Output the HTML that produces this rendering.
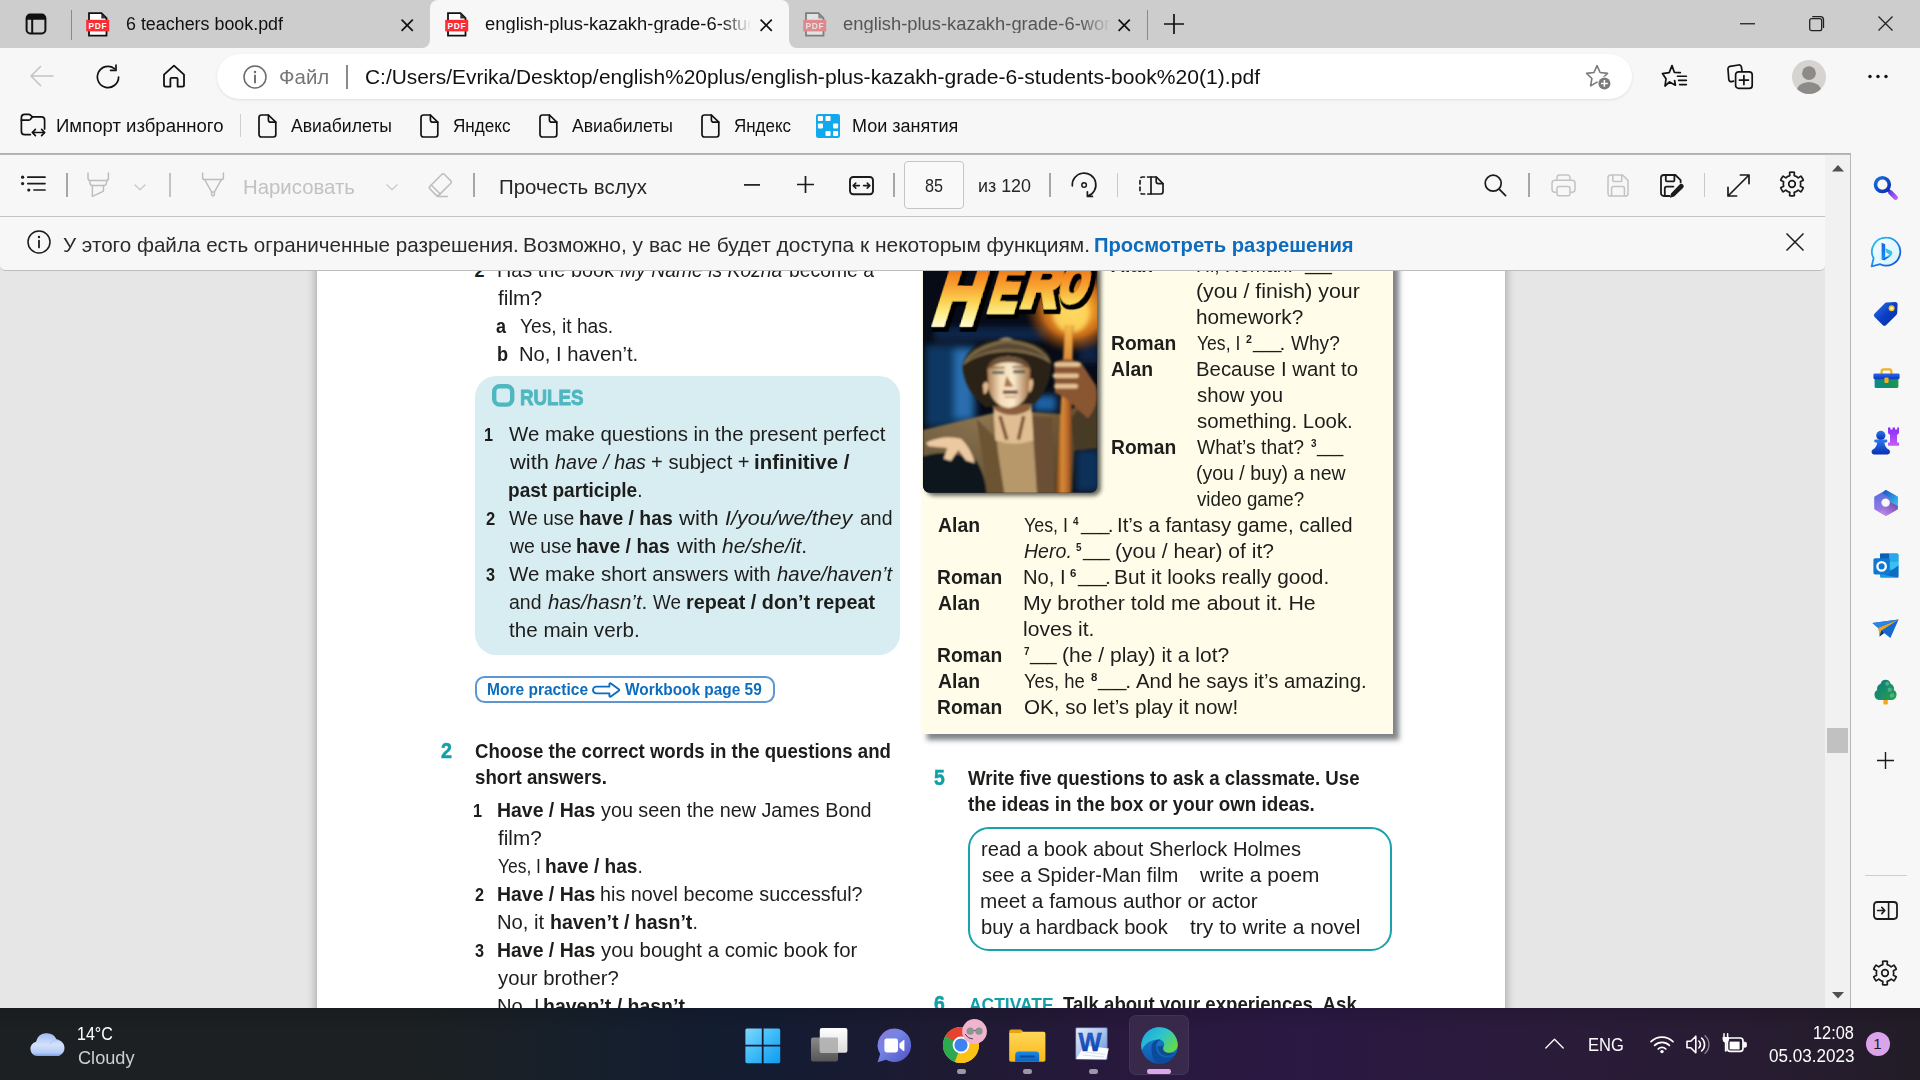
<!DOCTYPE html>
<html lang="ru">
<head>
<meta charset="utf-8">
<title>english-plus-kazakh-grade-6-students-book (1).pdf</title>
<style>
*{box-sizing:border-box;margin:0;padding:0}
html,body{width:1920px;height:1080px;overflow:hidden;background:#e6e6e6;font-family:"Liberation Sans",sans-serif;}
#screen{position:relative;width:1920px;height:1080px;overflow:hidden;background:#e6e6e6}
.t{position:absolute;white-space:nowrap;transform-origin:0 0}
.a{position:absolute}
.layer{position:absolute;left:0;top:0;width:0;height:0}
svg{position:absolute;overflow:visible}
b{font-weight:bold}
sup{font-size:60%;font-weight:bold;vertical-align:baseline;position:relative;top:-0.45em;line-height:0}
.u{position:relative;top:-1px;font-weight:normal}
i{font-style:italic}
.nb{font-weight:normal;font-style:normal}

</style>
</head>
<body>
<div id="screen">
<div class="layer" id="browser" style="z-index:3">
<div class="a" style="left:0px;top:0px;width:1920px;height:48px;background:#cdcdcd"></div>
<div class="a" style="left:0px;top:48px;width:1920px;height:105px;background:#f7f7f7"></div>
<div class="a" style="left:430px;top:0px;width:359px;height:49px;background:#f7f7f7;border-radius:8px 8px 0 0"></div>
<svg style="left:422px;top:40px" width="8" height="8" viewBox="0 0 8 8" ><path d="M8 0 A8 8 0 0 1 0 8 L8 8 Z" fill="#f7f7f7"/></svg>
<svg style="left:789px;top:40px" width="8" height="8" viewBox="0 0 8 8" ><path d="M0 0 A8 8 0 0 0 8 8 L0 8 Z" fill="#f7f7f7"/></svg>
<svg style="left:25px;top:13px" width="22" height="22" viewBox="0 0 22 22" ><rect x="1.6" y="1.6" width="18.8" height="18.8" rx="3.6" fill="none" stroke="#111" stroke-width="2"/><path d="M1.6 5.2 a3.6 3.6 0 0 1 3.6 -3.6 h11.6 a3.6 3.6 0 0 1 3.6 3.6 v1.6 h-18.8z" fill="#111"/><path d="M7.2 6 v14" stroke="#111" stroke-width="2"/></svg>
<div class="a" style="left:71px;top:10px;width:1px;height:30px;background:#8a8a8a"></div>
<svg style="left:86px;top:11px" width="24" height="26" viewBox="0 0 24 26" opacity="1"><path d="M3 2.2 h12.5 l5 5 v17.4 h-17.5z" fill="#fff" stroke="#111" stroke-width="1.8" stroke-linejoin="miter"/><path d="M15.3 2.4 v5.2 h5.2z" fill="#333"/><rect x="0.2" y="8.8" width="23" height="11.6" fill="#fb2d34"/><text x="12" y="17.7" font-family="Liberation Sans, sans-serif" font-weight="bold" font-size="8.4" fill="#fff" text-anchor="middle" letter-spacing="0.7">PDF</text></svg>
<svg style="left:445px;top:11px" width="24" height="26" viewBox="0 0 24 26" opacity="1"><path d="M3 2.2 h12.5 l5 5 v17.4 h-17.5z" fill="#fff" stroke="#111" stroke-width="1.8" stroke-linejoin="miter"/><path d="M15.3 2.4 v5.2 h5.2z" fill="#333"/><rect x="0.2" y="8.8" width="23" height="11.6" fill="#fb2d34"/><text x="12" y="17.7" font-family="Liberation Sans, sans-serif" font-weight="bold" font-size="8.4" fill="#fff" text-anchor="middle" letter-spacing="0.7">PDF</text></svg>
<svg style="left:803px;top:11px" width="24" height="26" viewBox="0 0 24 26" opacity="0.42"><path d="M3 2.2 h12.5 l5 5 v17.4 h-17.5z" fill="#fff" stroke="#111" stroke-width="1.8" stroke-linejoin="miter"/><path d="M15.3 2.4 v5.2 h5.2z" fill="#333"/><rect x="0.2" y="8.8" width="23" height="11.6" fill="#fb2d34"/><text x="12" y="17.7" font-family="Liberation Sans, sans-serif" font-weight="bold" font-size="8.4" fill="#fff" text-anchor="middle" letter-spacing="0.7">PDF</text></svg>
<svg style="left:401.2px;top:19px" width="12.4" height="12.4" viewBox="0 0 12.4 12.4" ><path d="M0.6 0.6 L11.8 11.8 M11.8 0.6 L0.6 11.8" stroke="#111" stroke-width="1.7" stroke-linecap="butt" fill="none"/></svg>
<svg style="left:759.6px;top:19px" width="12.4" height="12.4" viewBox="0 0 12.4 12.4" ><path d="M0.6 0.6 L11.8 11.8 M11.8 0.6 L0.6 11.8" stroke="#111" stroke-width="1.7" stroke-linecap="butt" fill="none"/></svg>
<svg style="left:1118.2px;top:19px" width="12.4" height="12.4" viewBox="0 0 12.4 12.4" ><path d="M0.6 0.6 L11.8 11.8 M11.8 0.6 L0.6 11.8" stroke="#111" stroke-width="1.7" stroke-linecap="butt" fill="none"/></svg>
<div class="a" style="left:1147px;top:10px;width:1px;height:30px;background:#8a8a8a"></div>
<svg style="left:1164px;top:14px" width="20" height="20" viewBox="0 0 20 20" ><path d="M10 0 V20 M0 10 H20" stroke="#111" stroke-width="1.7" fill="none"/></svg>
<svg style="left:1740px;top:23px" width="15" height="2" viewBox="0 0 15 2" ><path d="M0 0.75 H15" stroke="#222" stroke-width="1.3"/></svg>
<svg style="left:1809px;top:16px" width="16" height="16" viewBox="0 0 16 16" ><rect x="0.7" y="2.7" width="12" height="12" rx="2" fill="none" stroke="#222" stroke-width="1.3"/><path d="M3.2 0.7 H11.5 a3 3 0 0 1 3 3 V12" fill="none" stroke="#222" stroke-width="1.3"/></svg>
<svg style="left:1878px;top:16px" width="15" height="15" viewBox="0 0 15 15" ><path d="M0.5 0.5 L14.5 14.5 M14.5 0.5 L0.5 14.5" stroke="#222" stroke-width="1.3" fill="none"/></svg>
<svg style="left:29px;top:64px" width="26" height="24" viewBox="0 0 26 24" ><g fill="none" stroke="#c4c4c4" stroke-width="1.6" stroke-linecap="round" stroke-linejoin="round"><path d="M24 12 H2.5 M11.5 2.5 L2 12 L11.5 21.5"/></g></svg>
<svg style="left:95px;top:64px" width="26" height="26" viewBox="0 0 26 26" ><g fill="none" stroke="#111" stroke-width="1.7" stroke-linecap="round" stroke-linejoin="round"><path d="M23.6 13 A10.6 10.6 0 1 1 19.5 4.6"/><path d="M21 1.2 V6.4 H15.6" /></g></svg>
<svg style="left:162px;top:64px" width="24" height="24" viewBox="0 0 24 24" ><g fill="none" stroke="#111" stroke-width="1.8" stroke-linecap="round" stroke-linejoin="round"><path d="M2 10.6 L12 1.6 L22 10.6 V21 a1.6 1.6 0 0 1 -1.6 1.6 H15.6 V15 a1.2 1.2 0 0 0 -1.2 -1.2 H9.6 a1.2 1.2 0 0 0 -1.2 1.2 V22.6 H3.6 A1.6 1.6 0 0 1 2 21z"/></g></svg>
<div class="a" style="left:217px;top:54px;width:1415px;height:45px;background:#fff;border-radius:22.5px;box-shadow:0 1px 3px rgba(0,0,0,0.10)"></div>
<svg style="left:243px;top:64.5px" width="24" height="24" viewBox="0 0 24 24" ><g fill="none" stroke="#6b6b6b" stroke-width="1.5" stroke-linecap="round" stroke-linejoin="round"><circle cx="12" cy="12" r="11"/><path d="M12 10.5 V17.5" stroke-width="1.9"/><circle cx="12" cy="6.9" r="1.25" fill="#6b6b6b" stroke="none"/></g></svg>
<div class="a" style="left:346px;top:65px;width:1.5px;height:24px;background:#8a8a8a"></div>
<svg style="left:1585px;top:64px" width="28" height="27" viewBox="0 0 28 27" ><path d="M12 2 L14.9 8.4 L21.8 9.2 L16.8 14 L18 20.9 L12 17.4 L6 20.9 L7.2 14 L2.2 9.2 L9.1 8.4z" fill="none" stroke="#7a7a7a" stroke-width="1.5" stroke-linejoin="round" transform="translate(-0.8 -0.5) scale(1.07)"/><circle cx="19.4" cy="19.4" r="6.9" fill="#fff"/><circle cx="19.4" cy="19.4" r="6" fill="#7a7a7a"/><path d="M19.4 16 V22.8 M16 19.4 H22.8" stroke="#fff" stroke-width="1.5"/></svg>
<svg style="left:1661px;top:64px" width="27" height="25" viewBox="0 0 27 25" ><g fill="none" stroke="#111" stroke-width="1.7" stroke-linecap="round" stroke-linejoin="round"><path d="M11 1.6 L13.3 8.3 L19.3 8.6 M13.6 16.5 L14.4 21.2 L8.6 17.9 L4 22 L5 14.8 L1.4 9.6 L8.2 8.6 L11 1.6" /><path d="M16.4 12.2 H25.4 M17.6 16.4 H25.4 M18.6 20.6 H25.4" stroke-width="1.6"/></g></svg>
<svg style="left:1727px;top:63.5px" width="27" height="26" viewBox="0 0 27 26" ><g fill="none" stroke="#111" stroke-width="1.7" stroke-linecap="round" stroke-linejoin="round"><path d="M6.6 17.2 L4.6 17.6 a2.4 2.4 0 0 1 -2.8 -2 L1 5.2 a2.4 2.4 0 0 1 2 -2.8 L11.6 1 a2.4 2.4 0 0 1 2.8 2 L15 6.8"/><rect x="8.6" y="7.8" width="16.6" height="16.6" rx="3"/><path d="M16.9 11.6 V20.6 M12.4 16.1 H21.4"/></g></svg>
<svg style="left:1792px;top:60px" width="34" height="34" viewBox="0 0 34 34" ><defs><clipPath id="av"><circle cx="17" cy="17" r="17"/></clipPath></defs><circle cx="17" cy="17" r="17" fill="#d6d4d1"/><g clip-path="url(#av)" fill="#8d8a88"><circle cx="17" cy="13.2" r="6.9"/><ellipse cx="17" cy="30.5" rx="12" ry="8.6"/></g></svg>
<svg style="left:1868px;top:73.5px" width="20" height="5" viewBox="0 0 20 5" ><circle cx="2" cy="2.5" r="1.7" fill="#111"/><circle cx="10" cy="2.5" r="1.7" fill="#111"/><circle cx="18" cy="2.5" r="1.7" fill="#111"/></svg>
<svg style="left:20px;top:113px" width="26" height="26" viewBox="0 0 26 26" ><g fill="none" stroke="#111" stroke-width="1.7" stroke-linecap="round" stroke-linejoin="round"><path d="M10.4 21.6 H4.6 a3.2 3.2 0 0 1 -3.2 -3.2 V4.6 a3.2 3.2 0 0 1 3.2 -3.2 H8.8 a2.4 2.4 0 0 1 1.7 0.7 L12.4 3.8 H21.4 a3.2 3.2 0 0 1 3.2 3.2 V16"/><path d="M1.4 7.2 H8.6 a2.4 2.4 0 0 0 1.7 -0.7 L12.4 3.9"/><path d="M12.6 19.5 H24.4 M15.4 16.4 L12.3 19.5 L15.4 22.6 M21.6 16.4 L24.7 19.5 L21.6 22.6" stroke-width="1.7"/></g></svg>
<div class="a" style="left:240px;top:114px;width:1px;height:23px;background:#d0d0d0"></div>
<svg style="left:257.5px;top:114px" width="19" height="24" viewBox="0 0 19 24" ><g fill="none" stroke="#111" stroke-width="1.7" stroke-linecap="round" stroke-linejoin="round"><path d="M3.4 1 H10.4 L17.8 8.2 V20.6 a2.4 2.4 0 0 1 -2.4 2.4 H3.4 A2.4 2.4 0 0 1 1 20.6 V3.4 A2.4 2.4 0 0 1 3.4 1z"/><path d="M10.4 1.2 V6 a2.2 2.2 0 0 0 2.2 2.2 H17.6"/></g></svg>
<svg style="left:419.5px;top:114px" width="19" height="24" viewBox="0 0 19 24" ><g fill="none" stroke="#111" stroke-width="1.7" stroke-linecap="round" stroke-linejoin="round"><path d="M3.4 1 H10.4 L17.8 8.2 V20.6 a2.4 2.4 0 0 1 -2.4 2.4 H3.4 A2.4 2.4 0 0 1 1 20.6 V3.4 A2.4 2.4 0 0 1 3.4 1z"/><path d="M10.4 1.2 V6 a2.2 2.2 0 0 0 2.2 2.2 H17.6"/></g></svg>
<svg style="left:538.5px;top:114px" width="19" height="24" viewBox="0 0 19 24" ><g fill="none" stroke="#111" stroke-width="1.7" stroke-linecap="round" stroke-linejoin="round"><path d="M3.4 1 H10.4 L17.8 8.2 V20.6 a2.4 2.4 0 0 1 -2.4 2.4 H3.4 A2.4 2.4 0 0 1 1 20.6 V3.4 A2.4 2.4 0 0 1 3.4 1z"/><path d="M10.4 1.2 V6 a2.2 2.2 0 0 0 2.2 2.2 H17.6"/></g></svg>
<svg style="left:700.5px;top:114px" width="19" height="24" viewBox="0 0 19 24" ><g fill="none" stroke="#111" stroke-width="1.7" stroke-linecap="round" stroke-linejoin="round"><path d="M3.4 1 H10.4 L17.8 8.2 V20.6 a2.4 2.4 0 0 1 -2.4 2.4 H3.4 A2.4 2.4 0 0 1 1 20.6 V3.4 A2.4 2.4 0 0 1 3.4 1z"/><path d="M10.4 1.2 V6 a2.2 2.2 0 0 0 2.2 2.2 H17.6"/></g></svg>
<svg style="left:816px;top:114px" width="24" height="24" viewBox="0 0 24 24" ><rect width="24" height="24" rx="2.2" fill="#10a9ee"/><rect x="1.9" y="2" width="5.1" height="5" rx="0.8" fill="#fdfaf8"/><rect x="9.5" y="2" width="5.1" height="5" rx="0.8" fill="#fdfaf8"/><rect x="1.9" y="9.4" width="5.1" height="5" rx="0.8" fill="#fdfaf8"/><rect x="17" y="9.4" width="5.1" height="5" rx="0.8" fill="#fdfaf8"/><rect x="9.5" y="17" width="5.1" height="5" rx="0.8" fill="#fdfaf8"/><rect x="17" y="17" width="5.1" height="5" rx="0.8" fill="#fdfaf8"/></svg>
<div class="a" style="left:0px;top:153px;width:1851px;height:2px;background:linear-gradient(#acacac,#bdbdbd)"></div>
<div class="a" style="left:0px;top:155px;width:1825px;height:62px;background:#f7f7f7;border-bottom:1px solid #c3c3c3"></div>
<div class="a" style="left:0px;top:217px;width:1825px;height:54px;background:#f7f7f7;border-bottom:1px solid #bcbcbc;border-radius:0 0 5px 5px"></div>
<div class="a" style="left:1825px;top:155px;width:25px;height:853px;background:#f1f1f1"></div>
<div class="a" style="left:1850px;top:155px;width:1px;height:853px;background:#b9b9b9"></div>
<svg style="left:1831.5px;top:164.5px" width="12" height="7" viewBox="0 0 12 7" ><path d="M6 0 L12 6.6 H0z" fill="#505050"/></svg>
<svg style="left:1831.5px;top:992px" width="12" height="7" viewBox="0 0 12 7" ><path d="M6 6.6 L12 0 H0z" fill="#505050"/></svg>
<div class="a" style="left:1827px;top:727.5px;width:21px;height:25.5px;background:#c1c1c1"></div>
<svg style="left:21px;top:175px" width="25" height="18" viewBox="0 0 25 18" ><g fill="#1b1b1b"><circle cx="1.6" cy="2.2" r="1.6"/><circle cx="1.6" cy="8.6" r="1.6"/><circle cx="7.8" cy="15" r="1.6"/></g><path d="M6.8 2.2 H24 M6.8 8.6 H24 M13 15 H24" stroke="#1b1b1b" stroke-width="1.7" stroke-linecap="round"/></svg>
<div class="a" style="left:66.25px;top:173px;width:1.5px;height:24px;background:#a6a6a6"></div>
<svg style="left:87px;top:172px" width="23" height="26" viewBox="0 0 23 26" ><g fill="none" stroke="#bdbdbd" stroke-width="1.5" stroke-linecap="round" stroke-linejoin="round"><path d="M1 1 V6.2 a2.4 2.4 0 0 0 2.4 2.4 H19 a2.4 2.4 0 0 0 2.4 -2.4 V1"/><path d="M2.6 8.8 L3.2 11.8 a2 2 0 0 0 2 1.7 H17.2 a2 2 0 0 0 2 -1.7 L19.8 8.8"/><path d="M5.4 13.6 V24.4 L15.6 19.6 a1.5 1.5 0 0 0 0.9 -1.4 V13.6"/></g></svg>
<svg style="left:134px;top:184px" width="12" height="7" viewBox="0 0 12 7" ><g fill="none" stroke="#c8c8c8" stroke-width="1.2" stroke-linecap="round" stroke-linejoin="round"><path d="M0.8 0.8 L6 5.8 L11.2 0.8"/></g></svg>
<div class="a" style="left:169.25px;top:173px;width:1.5px;height:24px;background:#c3c3c3"></div>
<svg style="left:201px;top:172px" width="24" height="26" viewBox="0 0 24 26" ><g fill="none" stroke="#bdbdbd" stroke-width="1.5" stroke-linecap="round" stroke-linejoin="round"><path d="M1.6 1 V5.4 a2.2 2.2 0 0 0 2.2 2.2 H20.2 a2.2 2.2 0 0 0 2.2 -2.2 V1"/><path d="M3.8 7.8 L10.6 20 M20.2 7.8 L13.4 20 M10.6 20 H13.4 M10.6 20 V22.6 a1.4 1.4 0 0 0 2.8 0 V20"/></g></svg>
<svg style="left:386px;top:184px" width="12" height="7" viewBox="0 0 12 7" ><g fill="none" stroke="#c8c8c8" stroke-width="1.2" stroke-linecap="round" stroke-linejoin="round"><path d="M0.8 0.8 L6 5.8 L11.2 0.8"/></g></svg>
<svg style="left:428px;top:172px" width="25" height="26" viewBox="0 0 25 26" ><g fill="none" stroke="#bdbdbd" stroke-width="1.5" stroke-linecap="round" stroke-linejoin="round"><path d="M13.7 2.5 a2 2 0 0 1 2.8 0 L22.6 8.6 a2 2 0 0 1 0 2.8 L10.9 23.1 a2 2 0 0 1 -2.8 0 L2 17 a2 2 0 0 1 0 -2.8z"/><path d="M3.4 13.2 L12.2 22 M9.4 24.4 H19.4"/></g></svg>
<div class="a" style="left:473.25px;top:173px;width:1.5px;height:24px;background:#a6a6a6"></div>
<svg style="left:744px;top:184px" width="16" height="2" viewBox="0 0 16 2" ><path d="M0 0.9 H16" stroke="#1b1b1b" stroke-width="1.7"/></svg>
<svg style="left:797px;top:176px" width="17" height="17" viewBox="0 0 17 17" ><path d="M8.5 0 V17 M0 8.5 H17" stroke="#1b1b1b" stroke-width="1.7" fill="none"/></svg>
<svg style="left:848.5px;top:175.5px" width="25" height="19" viewBox="0 0 25 19" ><g fill="none" stroke="#1b1b1b" stroke-width="1.9" stroke-linecap="round" stroke-linejoin="round"><rect x="1" y="1" width="23" height="17.2" rx="3.2"/><path d="M4.2 9.6 H10.4 M6.8 7 L4.2 9.6 L6.8 12.2 M14.6 9.6 H20.8 M18.2 7 L20.8 9.6 L18.2 12.2" stroke-width="1.6"/></g></svg>
<div class="a" style="left:893.25px;top:173px;width:1.5px;height:24px;background:#a6a6a6"></div>
<div class="a" style="left:904px;top:161px;width:60px;height:48px;background:#f9f9f9;border:1px solid #c6c6c6;border-radius:4px"></div>
<div class="a" style="left:1049.25px;top:173px;width:1.5px;height:24px;background:#a6a6a6"></div>
<svg style="left:1071px;top:172px" width="26" height="26" viewBox="0 0 26 26" ><g fill="none" stroke="#1b1b1b" stroke-width="1.7" stroke-linecap="round" stroke-linejoin="round"><path d="M1.3 13.8 A11.8 11.8 0 1 1 16.8 24.1"/><path d="M16.4 19.8 V24.4 H21.4"/><circle cx="13.1" cy="13" r="2.3" stroke-width="1.5"/></g></svg>
<div class="a" style="left:1116.75px;top:173px;width:1.5px;height:24px;background:#c9c9c9"></div>
<svg style="left:1138.5px;top:175.5px" width="25" height="19" viewBox="0 0 25 19" ><g fill="none" stroke="#1b1b1b" stroke-width="1.7" stroke-linecap="round" stroke-linejoin="round"><path d="M12 1 H17.4 L24 7.6 V15.6 a2.4 2.4 0 0 1 -2.4 2.4 H12z"/><path d="M17.2 1.2 V5.4 a2.2 2.2 0 0 0 2.2 2.2 H23.8"/><path d="M12 1 H3.4 A2.4 2.4 0 0 0 1 3.4 V15.6 A2.4 2.4 0 0 0 3.4 18 H12" stroke-dasharray="3.4 3.2"/></g></svg>
<svg style="left:1484px;top:173.5px" width="23" height="23" viewBox="0 0 23 23" ><g fill="none" stroke="#1b1b1b" stroke-width="1.7" stroke-linecap="round" stroke-linejoin="round"><circle cx="9.2" cy="9.2" r="8"/><path d="M15.2 15.2 L21.6 21.6"/></g></svg>
<div class="a" style="left:1528.25px;top:173px;width:1.5px;height:24px;background:#a6a6a6"></div>
<svg style="left:1550.5px;top:173.5px" width="25" height="23" viewBox="0 0 25 23" ><g fill="none" stroke="#c3c3c3" stroke-width="1.5" stroke-linecap="round" stroke-linejoin="round"><path d="M6 6.2 V3.6 A2.6 2.6 0 0 1 8.6 1 H16.4 A2.6 2.6 0 0 1 19 3.6 V6.2"/><rect x="1" y="6.2" width="23" height="12" rx="3"/><rect x="6" y="12.4" width="13" height="9.4" rx="2" fill="#f7f7f7"/></g></svg>
<svg style="left:1606.5px;top:173.5px" width="22" height="23" viewBox="0 0 22 23" ><g fill="none" stroke="#c3c3c3" stroke-width="1.5" stroke-linecap="round" stroke-linejoin="round"><path d="M3.6 1 H15.6 L21 6.4 V19.4 A2.6 2.6 0 0 1 18.4 22 H3.6 A2.6 2.6 0 0 1 1 19.4 V3.6 A2.6 2.6 0 0 1 3.6 1z"/><path d="M5.8 1.2 V6.4 a1.2 1.2 0 0 0 1.2 1.2 H13.6 a1.2 1.2 0 0 0 1.2 -1.2 V1.2 M4.6 21.8 V14.2 a1.8 1.8 0 0 1 1.8 -1.8 H15.6 a1.8 1.8 0 0 1 1.8 1.8 V21.8"/></g></svg>
<svg style="left:1660px;top:173.5px" width="25" height="24" viewBox="0 0 25 24" ><g fill="none" stroke="#1b1b1b" stroke-width="1.8" stroke-linejoin="round" stroke-linecap="round"><path d="M9.4 22 H3.8 A2.8 2.8 0 0 1 1 19.2 V3.8 A2.8 2.8 0 0 1 3.8 1 H15.4 L20.6 6.2 V8.4"/><path d="M5.8 1.2 V6.2 a1.2 1.2 0 0 0 1.2 1.2 H13.2 a1.2 1.2 0 0 0 1.2 -1.2 V1.2 M4.8 21.8 V14.4 a1.8 1.8 0 0 1 1.8 -1.8 H13.4"/></g><path d="M19.6 10.6 a2.4 2.4 0 0 1 3.4 3.4 L14.2 22.6 L9.8 23.8 L11 19.4z" fill="#1b1b1b"/></svg>
<div class="a" style="left:1703.75px;top:173px;width:1.5px;height:24px;background:#c9c9c9"></div>
<svg style="left:1726.5px;top:173.5px" width="23" height="23" viewBox="0 0 23 23" ><g fill="none" stroke="#1b1b1b" stroke-width="1.7" stroke-linecap="round" stroke-linejoin="round"><path d="M13.4 1 H22 V9.6 M22 1 L1 22 M1 13.4 V22 H9.6"/></g></svg>
<svg style="left:1779px;top:171px" width="26" height="26" viewBox="0 0 26 26" ><g fill="none" stroke="#1b1b1b" stroke-width="1.7" stroke-linecap="round" stroke-linejoin="round"><path d="M15.37 1.34 A11.90 11.90 0 0 0 10.63 1.34 L10.82 4.58 A8.70 8.70 0 0 0 6.79 6.90 L4.09 5.11 A11.90 11.90 0 0 0 1.71 9.22 L4.62 10.68 A8.70 8.70 0 0 0 4.62 15.32 L1.71 16.78 A11.90 11.90 0 0 0 4.09 20.89 L6.79 19.10 A8.70 8.70 0 0 0 10.82 21.42 L10.63 24.66 A11.90 11.90 0 0 0 15.37 24.66 L15.18 21.42 A8.70 8.70 0 0 0 19.21 19.10 L21.91 20.89 A11.90 11.90 0 0 0 24.29 16.78 L21.38 15.32 A8.70 8.70 0 0 0 21.38 10.68 L24.29 9.22 A11.90 11.90 0 0 0 21.91 5.11 L19.21 6.90 A8.70 8.70 0 0 0 15.18 4.58 Z"/><circle cx="13" cy="13" r="3.3"/></g></svg>
<svg style="left:27px;top:230px" width="24" height="24" viewBox="0 0 24 24" ><g fill="none" stroke="#1b1b1b" stroke-width="1.5" stroke-linecap="round" stroke-linejoin="round"><circle cx="12" cy="12" r="11"/><path d="M12 10.6 V17.4" stroke-width="1.8"/><circle cx="12" cy="7" r="1.2" fill="#1b1b1b" stroke="none"/></g></svg>
<svg style="left:1786px;top:233px" width="18" height="18" viewBox="0 0 18 18" ><path d="M0.5 0.5 L17.5 17.5 M17.5 0.5 L0.5 17.5" stroke="#1b1b1b" stroke-width="1.5" fill="none"/></svg>
<div class="t" style="left:126.00px;top:15.00px;font-size:18px;line-height:18px;color:#111;transform:scaleX(0.9931);">6 teachers book.pdf</div>
<div class="t" style="left:485.00px;top:15.00px;font-size:18px;line-height:18px;color:#111;transform:scaleX(1.0200);width:261px;overflow:hidden;-webkit-mask-image:linear-gradient(90deg,#000 0,#000 232px,transparent 261px);mask-image:linear-gradient(90deg,#000 0,#000 232px,transparent 261px);">english-plus-kazakh-grade-6-students-book</div>
<div class="t" style="left:843.00px;top:15.00px;font-size:18px;line-height:18px;color:#555;transform:scaleX(1.0200);width:263px;overflow:hidden;-webkit-mask-image:linear-gradient(90deg,#000 0,#000 234px,transparent 263px);mask-image:linear-gradient(90deg,#000 0,#000 234px,transparent 263px);">english-plus-kazakh-grade-6-workbook</div>
<div class="t" style="left:278.53px;top:66.00px;font-size:21px;line-height:21px;color:#767676;transform:scaleX(0.9722);">Файл</div>
<div class="t" style="left:365.00px;top:66.00px;font-size:21px;line-height:21px;color:#111;transform:scaleX(0.9952);">C:/Users/Evrika/Desktop/</div>
<div class="t" style="left:598.60px;top:66.00px;font-size:21px;line-height:21px;color:#111;transform:scaleX(0.9941);">english%20plus/</div>
<div class="t" style="left:750.80px;top:66.00px;font-size:21px;line-height:21px;color:#111;transform:scaleX(1.0048);">english-plus-kazakh-grade-6-students-book%20(1).pdf</div>
<div class="t" style="left:56.47px;top:117.00px;font-size:18px;line-height:18px;color:#111;transform:scaleX(1.0314);">Импорт избранного</div>
<div class="t" style="left:291.00px;top:117.00px;font-size:18px;line-height:18px;color:#111;transform:scaleX(0.9789);">Авиабилеты</div>
<div class="t" style="left:453.00px;top:117.00px;font-size:18px;line-height:18px;color:#111;transform:scaleX(0.9499);">Яндекс</div>
<div class="t" style="left:572.00px;top:117.00px;font-size:18px;line-height:18px;color:#111;transform:scaleX(0.9789);">Авиабилеты</div>
<div class="t" style="left:734.00px;top:117.00px;font-size:18px;line-height:18px;color:#111;transform:scaleX(0.9417);">Яндекс</div>
<div class="t" style="left:851.50px;top:117.00px;font-size:18px;line-height:18px;color:#111;transform:scaleX(0.9999);">Мои занятия</div>
<div class="t" style="left:243.03px;top:176.00px;font-size:21px;line-height:21px;color:#c2c2c2;transform:scaleX(0.9701);">Нарисовать</div>
<div class="t" style="left:498.53px;top:176.00px;font-size:21px;line-height:21px;color:#262626;transform:scaleX(0.9725);">Прочесть вслух</div>
<div class="t" style="left:924.50px;top:177.00px;font-size:18px;line-height:18px;color:#262626;transform:scaleX(0.9000);">85</div>
<div class="t" style="left:978.01px;top:177.00px;font-size:18px;line-height:18px;color:#262626;transform:scaleX(0.9937);">из 120</div>
<div class="t" style="left:63.00px;top:234.00px;font-size:21px;line-height:21px;color:#2b2b2b;transform:scaleX(0.9827);">У этого файла есть ограниченные разрешения.</div>
<div class="t" style="left:522.80px;top:234.00px;font-size:21px;line-height:21px;color:#2b2b2b;transform:scaleX(0.9968);">Возможно, у вас не будет доступа к некоторым функциям.</div>
<div class="t" style="left:1094.04px;top:234.00px;font-size:21px;line-height:21px;color:#0f6cbd;font-weight:bold;transform:scaleX(0.9617);">Просмотреть разрешения</div>
</div>
<div class="layer" id="document" style="z-index:1">
<div class="a" style="left:317px;top:155px;width:1188px;height:860px;background:#fff;box-shadow:0 0 9px 1px rgba(0,0,0,0.30)"></div>
<div class="a" style="left:475px;top:376px;width:425px;height:278.5px;background:#d8edf2;border-radius:21px"></div>
<svg style="left:491.8px;top:384px" width="22.4" height="22.8" viewBox="0 0 22.4 22.8" ><rect x="2.2" y="2.2" width="18" height="18.4" rx="5.4" fill="none" stroke="#4fb7c0" stroke-width="4.4"/></svg>
<div class="a" style="left:475px;top:676.2px;width:299.8px;height:26.6px;border:2px solid #5d96d3;border-radius:9.5px;background:#fff"></div>
<svg style="left:592px;top:682px" width="29" height="16" viewBox="0 0 29 16" ><path d="M4.4 4.6 H17.4 V2.2 a0.9 0.9 0 0 1 1.5 -0.7 L26.8 7.3 a0.9 0.9 0 0 1 0 1.4 L18.9 14.5 a0.9 0.9 0 0 1 -1.5 -0.7 V11.4 H4.4 a3.4 3.4 0 0 1 0 -6.8z" fill="#fff" stroke="#0b6dbf" stroke-width="1.9" stroke-linejoin="round"/></svg>
<div class="a" style="left:922px;top:200px;width:471.3px;height:533.8px;background:#fffde9;box-shadow:5.5px 5.5px 5px 0.5px rgba(64,68,78,0.66)"></div>
<svg style="left:910px;top:265px" width="200" height="240" viewBox="0 0 900 1080">
<defs>
<clipPath id="hc"><rect x="58" y="-200" width="785" height="1225" rx="32"/></clipPath>
<linearGradient id="hg" x1="0" y1="20" x2="0" y2="275" gradientUnits="userSpaceOnUse"><stop offset="0" stop-color="#f07a1a"/><stop offset="0.28" stop-color="#f8a030"/><stop offset="0.55" stop-color="#fbd050"/><stop offset="0.8" stop-color="#fdf090"/><stop offset="1" stop-color="#fffad0"/></linearGradient>
<radialGradient id="fl" cx="0.5" cy="0.5" r="0.5"><stop offset="0" stop-color="#ffe884"/><stop offset="0.3" stop-color="#fbb034"/><stop offset="0.6" stop-color="#d9741a" stop-opacity="0.9"/><stop offset="0.82" stop-color="#8a4510" stop-opacity="0.5"/><stop offset="1" stop-color="#3a1c06" stop-opacity="0"/></radialGradient>
<linearGradient id="st" x1="0" y1="0" x2="1" y2="0"><stop offset="0" stop-color="#7c3f16"/><stop offset="0.35" stop-color="#d88a38"/><stop offset="0.7" stop-color="#b5652a"/><stop offset="1" stop-color="#6e3614"/></linearGradient>
<linearGradient id="st2" x1="0" y1="0" x2="0" y2="1"><stop offset="0" stop-color="#f8b848"/><stop offset="1" stop-color="#d88a38"/></linearGradient>
<linearGradient id="sk" x1="0" y1="0" x2="1" y2="0"><stop offset="0" stop-color="#a87c54"/><stop offset="0.3" stop-color="#f4dcb8"/><stop offset="0.6" stop-color="#fbeacc"/><stop offset="1" stop-color="#a06e46"/></linearGradient>
<linearGradient id="jk" x1="0" y1="0" x2="1" y2="0"><stop offset="0" stop-color="#8c7450"/><stop offset="0.35" stop-color="#9a8058"/><stop offset="0.7" stop-color="#86693f"/><stop offset="1" stop-color="#5e4a30"/></linearGradient>
<linearGradient id="jv" x1="0" y1="0" x2="0" y2="1"><stop offset="0" stop-color="#000" stop-opacity="0"/><stop offset="1" stop-color="#000" stop-opacity="0.35"/></linearGradient>
<filter id="b4" x="-30%" y="-30%" width="160%" height="160%"><feGaussianBlur stdDeviation="4.5"/></filter>
<filter id="b9" x="-30%" y="-30%" width="160%" height="160%"><feGaussianBlur stdDeviation="9"/></filter>
<filter id="b20" x="-50%" y="-50%" width="200%" height="200%"><feGaussianBlur stdDeviation="17"/></filter>
<filter id="hs" x="-20%" y="-20%" width="150%" height="150%" filterUnits="objectBoundingBox"><feMorphology in="SourceAlpha" operator="dilate" radius="7" result="d"/><feOffset in="d" dx="14" dy="12" result="o"/><feFlood flood-color="#000"/><feComposite in2="o" operator="in" result="sh"/><feMerge><feMergeNode in="sh"/><feMergeNode in="SourceGraphic"/></feMerge></filter>
</defs>
<rect x="74" y="-100" width="785" height="1138" rx="32" fill="#000" opacity="0.6" filter="url(#b9)"/>
<g clip-path="url(#hc)">
<rect x="58" y="-200" width="785" height="1225" fill="#060b16"/>
<g filter="url(#b20)">
<rect x="70" y="360" width="230" height="370" fill="#113863"/>
<rect x="200" y="380" width="80" height="310" fill="#2a6eb0"/>
<rect x="110" y="280" width="500" height="60" fill="#10284c"/>
<rect x="555" y="585" width="105" height="75" fill="#1f62a4"/>
<rect x="745" y="830" width="110" height="190" fill="#11305a"/>
<rect x="760" y="330" width="90" height="110" fill="#0e2444"/>
</g>
<ellipse cx="735" cy="200" rx="225" ry="205" fill="url(#fl)"/>
<ellipse cx="725" cy="220" rx="80" ry="85" fill="#ffd860" opacity="0.85" filter="url(#b9)"/>
<g filter="url(#b4)">
<path d="M58 742 L372 667 L547 662 L700 672 L843 560 L843 825 L740 835 L730 1030 L330 1030 L290 890 L58 860z" fill="url(#jk)"/>
<path d="M58 742 L372 667 L547 662 L700 672 L843 560 L843 825 L740 835 L730 1030 L330 1030 L290 890 L58 860z" fill="url(#jv)"/>
<path d="M722 690 L843 560 L843 825 L740 835z" fill="#473a26"/>
<path d="M58 862 Q170 822 300 882 Q340 950 345 1030 L58 1030z" fill="#0b131d"/>
<path d="M392 790 L562 790 L572 1030 L402 1030z" fill="#b6986a"/>
<path d="M300 692 L386 780 L425 1030 L350 1030z" fill="#6c5232"/>
<path d="M548 680 L640 686 L652 1030 L572 1030z" fill="#6a5034"/>
<path d="M374 625 L546 625 L556 790 Q470 818 384 790z" fill="#e0bd92"/>
<path d="M405 680 L436 786 M512 680 L488 786" stroke="#7a5232" stroke-width="15" fill="none"/>
<path d="M380 650 Q460 700 540 650 L546 625 L374 625z" fill="#8a5e3c"/>
<path d="M697 270 L735 270 L722 1030 L657 1030z" fill="url(#st)"/>
<path d="M699 270 L733 270 L729 430 L693 430z" fill="url(#st2)"/>
<path d="M236 462 Q240 388 330 350 Q430 318 545 348 Q640 380 637 452 Q628 560 560 622 L340 640 Q246 566 236 462z" fill="#2a2116"/>
<path d="M238 452 Q262 368 432 334 Q600 350 636 444 Q560 392 432 390 Q312 394 238 452z" fill="#7c6a48"/>
<path d="M260 430 Q300 376 432 350 Q570 362 612 420 Q540 380 432 378 Q330 382 260 430z" fill="#5a4a32"/>
<path d="M398 338 Q432 314 466 336z" fill="#a08c62"/>
<path d="M348 470 Q356 416 442 412 Q530 416 542 470 L536 560 Q520 632 446 644 Q376 634 354 560z" fill="url(#sk)"/>
<path d="M348 470 Q356 416 442 412 Q530 416 542 470 Q500 438 442 438 Q388 438 348 470z" fill="#5a4028" opacity="0.85"/>
<path d="M328 540 q14 -30 26 0 q-4 40 -22 42z M536 520 q18 -22 18 14 q-4 36 -20 42z" fill="#e0b88c"/>
<path d="M370 484 h54 M464 480 h54" stroke="#5c6650" stroke-width="14"/>
<path d="M362 462 h64 M460 458 h64" stroke="#86643f" stroke-width="8"/>
<path d="M434 500 L424 548 L466 548z" fill="#aa764a"/>
<path d="M418 572 h66" stroke="#5e3024" stroke-width="14"/>
<path d="M425 594 h52" stroke="#c99a70" stroke-width="8"/>
<path d="M648 440 Q700 408 770 440 L838 545 Q850 640 800 690 L700 600 L652 575z" fill="#8a5630"/>
<path d="M658 448 h100 M652 498 h98 M658 546 h88" stroke="#e6c294" stroke-width="20" stroke-linecap="round"/>
<path d="M72 800 Q150 762 230 782 Q272 820 292 892 L252 880 L218 832 L184 882 L152 872 L168 824 L84 816z" fill="#ecc9a0"/>
</g>
<g font-family="Liberation Sans, sans-serif" font-weight="bold" font-style="italic" transform="skewX(-10)" filter="url(#hs)">
<text fill="url(#hg)" stroke="url(#hg)" stroke-width="24" stroke-linejoin="miter"><tspan x="150" y="268" font-size="385" textLength="205" lengthAdjust="spacingAndGlyphs">H</tspan><tspan x="388" y="207" font-size="300" textLength="128" lengthAdjust="spacingAndGlyphs">E</tspan><tspan x="536" y="188" font-size="275" textLength="158" lengthAdjust="spacingAndGlyphs">R</tspan><tspan x="694" y="166" font-size="240" textLength="124" lengthAdjust="spacingAndGlyphs">O</tspan></text>
</g>
</g>
</svg>
<div class="a" style="left:967.8px;top:827px;width:424.6px;height:124px;border:2px solid #18a2a9;border-radius:21px;background:#fff"></div>
<div class="t" style="left:474.60px;top:262.00px;font-size:18px;line-height:18px;color:#1d1d1b;font-weight:bold;">2</div>
<div class="t" style="left:496.83px;top:260.00px;font-size:20.5px;line-height:20.5px;color:#1d1d1b;transform:scaleX(0.9681);white-space:pre;">Has the book</div>
<div class="t" style="left:620.00px;top:260.00px;font-size:20.5px;line-height:20.5px;color:#1d1d1b;font-style:italic;transform:scaleX(0.9439);white-space:pre;">My Name is Kozha</div>
<div class="t" style="left:789.06px;top:260.00px;font-size:20.5px;line-height:20.5px;color:#1d1d1b;transform:scaleX(0.9428);white-space:pre;">become a</div>
<div class="t" style="left:497.80px;top:288.00px;font-size:20.5px;line-height:20.5px;color:#1d1d1b;transform:scaleX(1.0191);">film?</div>
<div class="t" style="left:496.45px;top:316.00px;font-size:20px;line-height:20px;color:#1d1d1b;font-weight:bold;transform:scaleX(0.9000);">a</div>
<div class="t" style="left:520.00px;top:316.00px;font-size:20.5px;line-height:20.5px;color:#1d1d1b;transform:scaleX(0.9363);">Yes, it has.</div>
<div class="t" style="left:496.89px;top:344.00px;font-size:20px;line-height:20px;color:#1d1d1b;font-weight:bold;transform:scaleX(0.9091);">b</div>
<div class="t" style="left:519.01px;top:344.00px;font-size:20.5px;line-height:20.5px;color:#1d1d1b;transform:scaleX(0.9865);">No, I haven’t.</div>
<div class="t" style="left:520.45px;top:387.00px;font-size:22px;line-height:22px;color:#4fb7c0;font-weight:bold;transform:scaleX(0.8520);-webkit-text-stroke:0.9px #4fb7c0;">RULES</div>
<div class="t" style="left:484.40px;top:426.00px;font-size:18px;line-height:18px;color:#1d1d1b;font-weight:bold;transform:scaleX(0.9000);">1</div>
<div class="t" style="left:509.40px;top:424.00px;font-size:20.5px;line-height:20.5px;color:#1d1d1b;transform:scaleX(0.9957);">We make questions in the present perfect</div>
<div class="t" style="left:510.47px;top:452.00px;font-size:20.5px;line-height:20.5px;color:#1d1d1b;transform:scaleX(1.0714);white-space:pre;">with</div>
<div class="t" style="left:555.30px;top:452.00px;font-size:20.5px;line-height:20.5px;color:#1d1d1b;font-style:italic;transform:scaleX(0.9614);white-space:pre;">have / has</div>
<div class="t" style="left:650.72px;top:452.00px;font-size:20.5px;line-height:20.5px;color:#1d1d1b;transform:scaleX(0.9836);white-space:pre;">+ subject +</div>
<div class="t" style="left:753.60px;top:452.00px;font-size:20.5px;line-height:20.5px;color:#1d1d1b;font-weight:bold;transform:scaleX(0.9971);white-space:pre;">infinitive /</div>
<div class="t" style="left:508.47px;top:480.00px;font-size:20.5px;line-height:20.5px;color:#1d1d1b;font-weight:bold;transform:scaleX(0.9295);white-space:pre;">past participle<span class="nb">.</span></div>
<div class="t" style="left:486.00px;top:510.00px;font-size:18px;line-height:18px;color:#1d1d1b;font-weight:bold;transform:scaleX(0.9200);">2</div>
<div class="t" style="left:509.40px;top:508.00px;font-size:20.5px;line-height:20.5px;color:#1d1d1b;transform:scaleX(0.9443);white-space:pre;">We use</div>
<div class="t" style="left:579.05px;top:508.00px;font-size:20.5px;line-height:20.5px;color:#1d1d1b;font-weight:bold;transform:scaleX(0.9454);white-space:pre;">have / has</div>
<div class="t" style="left:679.08px;top:508.00px;font-size:20.5px;line-height:20.5px;color:#1d1d1b;transform:scaleX(1.0849);white-space:pre;">with</div>
<div class="t" style="left:724.80px;top:508.00px;font-size:20.5px;line-height:20.5px;color:#1d1d1b;font-style:italic;transform:scaleX(1.0536);white-space:pre;">I/you/we/they</div>
<div class="t" style="left:859.60px;top:508.00px;font-size:20.5px;line-height:20.5px;color:#1d1d1b;transform:scaleX(0.9496);white-space:pre;">and</div>
<div class="t" style="left:510.15px;top:536.00px;font-size:20.5px;line-height:20.5px;color:#1d1d1b;transform:scaleX(0.9504);white-space:pre;">we use</div>
<div class="t" style="left:576.35px;top:536.00px;font-size:20.5px;line-height:20.5px;color:#1d1d1b;font-weight:bold;transform:scaleX(0.9464);white-space:pre;">have / has</div>
<div class="t" style="left:676.68px;top:536.00px;font-size:20.5px;line-height:20.5px;color:#1d1d1b;transform:scaleX(1.0822);white-space:pre;">with</div>
<div class="t" style="left:722.00px;top:536.00px;font-size:20.5px;line-height:20.5px;color:#1d1d1b;font-style:italic;transform:scaleX(1.0221);white-space:pre;">he/she/it<span class="nb">.</span></div>
<div class="t" style="left:486.00px;top:566.00px;font-size:18px;line-height:18px;color:#1d1d1b;font-weight:bold;transform:scaleX(0.9000);">3</div>
<div class="t" style="left:509.40px;top:564.00px;font-size:20.5px;line-height:20.5px;color:#1d1d1b;transform:scaleX(1.0002);white-space:pre;">We make short answers with</div>
<div class="t" style="left:777.00px;top:564.00px;font-size:20.5px;line-height:20.5px;color:#1d1d1b;font-style:italic;transform:scaleX(0.9910);white-space:pre;">have/haven’t</div>
<div class="t" style="left:509.40px;top:592.00px;font-size:20.5px;line-height:20.5px;color:#1d1d1b;transform:scaleX(0.9496);white-space:pre;">and</div>
<div class="t" style="left:548.40px;top:592.00px;font-size:20.5px;line-height:20.5px;color:#1d1d1b;font-style:italic;transform:scaleX(1.0015);white-space:pre;">has/hasn’t<span class="nb">.</span></div>
<div class="t" style="left:653.30px;top:592.00px;font-size:20.5px;line-height:20.5px;color:#1d1d1b;transform:scaleX(0.9173);white-space:pre;">We</div>
<div class="t" style="left:686.04px;top:592.00px;font-size:20.5px;line-height:20.5px;color:#1d1d1b;font-weight:bold;transform:scaleX(0.9646);white-space:pre;">repeat / don’t repeat</div>
<div class="t" style="left:509.40px;top:620.00px;font-size:20.5px;line-height:20.5px;color:#1d1d1b;transform:scaleX(1.0062);">the main verb.</div>
<div class="t" style="left:486.89px;top:681.00px;font-size:17px;line-height:17px;color:#0b6dbf;font-weight:bold;transform:scaleX(0.9140);">More practice</div>
<div class="t" style="left:625.00px;top:681.00px;font-size:17px;line-height:17px;color:#0b6dbf;font-weight:bold;transform:scaleX(0.9064);">Workbook page 59</div>
<div class="t" style="left:441.20px;top:741.00px;font-size:21.5px;line-height:21.5px;color:#12a0a6;font-weight:bold;transform:scaleX(0.9167);-webkit-text-stroke:0.55px #12a0a6;">2</div>
<div class="t" style="left:474.50px;top:741.00px;font-size:20.5px;line-height:20.5px;color:#1d1d1b;font-weight:bold;transform:scaleX(0.9084);">Choose the correct words in the questions and</div>
<div class="t" style="left:474.50px;top:767.00px;font-size:20.5px;line-height:20.5px;color:#1d1d1b;font-weight:bold;transform:scaleX(0.9111);">short answers.</div>
<div class="t" style="left:473.20px;top:802.00px;font-size:18px;line-height:18px;color:#1d1d1b;font-weight:bold;transform:scaleX(0.9000);">1</div>
<div class="t" style="left:497.05px;top:800.00px;font-size:20.5px;line-height:20.5px;color:#1d1d1b;font-weight:bold;transform:scaleX(0.9482);white-space:pre;">Have / Has</div>
<div class="t" style="left:600.50px;top:800.00px;font-size:20.5px;line-height:20.5px;color:#1d1d1b;transform:scaleX(0.9645);white-space:pre;">you seen the new James Bond</div>
<div class="t" style="left:498.00px;top:828.00px;font-size:20.5px;line-height:20.5px;color:#1d1d1b;transform:scaleX(1.0098);">film?</div>
<div class="t" style="left:498.00px;top:856.00px;font-size:20.5px;line-height:20.5px;color:#1d1d1b;transform:scaleX(0.8498);white-space:pre;">Yes, I</div>
<div class="t" style="left:545.37px;top:856.00px;font-size:20.5px;line-height:20.5px;color:#1d1d1b;font-weight:bold;transform:scaleX(0.9327);white-space:pre;">have / has<span class="nb">.</span></div>
<div class="t" style="left:474.90px;top:886.00px;font-size:18px;line-height:18px;color:#1d1d1b;font-weight:bold;transform:scaleX(0.9000);">2</div>
<div class="t" style="left:497.05px;top:884.00px;font-size:20.5px;line-height:20.5px;color:#1d1d1b;font-weight:bold;transform:scaleX(0.9482);white-space:pre;">Have / Has</div>
<div class="t" style="left:600.34px;top:884.00px;font-size:20.5px;line-height:20.5px;color:#1d1d1b;transform:scaleX(0.9641);white-space:pre;">his novel become successful?</div>
<div class="t" style="left:497.01px;top:912.00px;font-size:20.5px;line-height:20.5px;color:#1d1d1b;transform:scaleX(0.9862);white-space:pre;">No, it</div>
<div class="t" style="left:549.85px;top:912.00px;font-size:20.5px;line-height:20.5px;color:#1d1d1b;font-weight:bold;transform:scaleX(0.9541);white-space:pre;">haven’t / hasn’t<span class="nb">.</span></div>
<div class="t" style="left:474.65px;top:942.00px;font-size:18px;line-height:18px;color:#1d1d1b;font-weight:bold;transform:scaleX(0.9000);">3</div>
<div class="t" style="left:497.05px;top:940.00px;font-size:20.5px;line-height:20.5px;color:#1d1d1b;font-weight:bold;transform:scaleX(0.9482);white-space:pre;">Have / Has</div>
<div class="t" style="left:600.50px;top:940.00px;font-size:20.5px;line-height:20.5px;color:#1d1d1b;transform:scaleX(0.9953);white-space:pre;">you bought a comic book for</div>
<div class="t" style="left:497.60px;top:968.00px;font-size:20.5px;line-height:20.5px;color:#1d1d1b;transform:scaleX(0.9907);">your brother?</div>
<div class="t" style="left:497.01px;top:996.00px;font-size:20.5px;line-height:20.5px;color:#1d1d1b;transform:scaleX(0.9853);white-space:pre;">No, I</div>
<div class="t" style="left:542.85px;top:996.00px;font-size:20.5px;line-height:20.5px;color:#1d1d1b;font-weight:bold;transform:scaleX(0.9509);white-space:pre;">haven’t / hasn’t<span class="nb">.</span></div>
<div class="t" style="left:1110.90px;top:255.00px;font-size:20.5px;line-height:20.5px;color:#1d1d1b;font-weight:bold;transform:scaleX(0.9453);">Alan</div>
<div class="t" style="left:1196.26px;top:255.00px;font-size:20.5px;line-height:20.5px;color:#1d1d1b;transform:scaleX(0.9446);white-space:pre;">Hi, Roman.</div>
<div class="t" style="left:1298.40px;top:256.00px;font-size:11px;line-height:11px;color:#1d1d1b;font-weight:bold;transform:scaleX(0.9667);white-space:pre;">1</div>
<div class="t" style="left:1305.48px;top:253.00px;font-size:20.5px;line-height:20.5px;color:#1d1d1b;transform:scaleX(0.7849);white-space:pre;">___</div>
<div class="t" style="left:1196.16px;top:281.00px;font-size:20.5px;line-height:20.5px;color:#1d1d1b;transform:scaleX(1.0422);">(you / finish) your</div>
<div class="t" style="left:1196.19px;top:307.00px;font-size:20.5px;line-height:20.5px;color:#1d1d1b;transform:scaleX(1.0118);">homework?</div>
<div class="t" style="left:1110.56px;top:333.00px;font-size:20.5px;line-height:20.5px;color:#1d1d1b;font-weight:bold;transform:scaleX(0.9374);">Roman</div>
<div class="t" style="left:1197.20px;top:333.00px;font-size:20.5px;line-height:20.5px;color:#1d1d1b;transform:scaleX(0.8560);white-space:pre;">Yes, I</div>
<div class="t" style="left:1245.60px;top:334.00px;font-size:11px;line-height:11px;color:#1d1d1b;font-weight:bold;transform:scaleX(0.9667);white-space:pre;">2</div>
<div class="t" style="left:1252.74px;top:331.00px;font-size:20.5px;line-height:20.5px;color:#1d1d1b;transform:scaleX(0.8387);white-space:pre;">___</div>
<div class="t" style="left:1279.50px;top:333.00px;font-size:20.5px;line-height:20.5px;color:#1d1d1b;white-space:pre;">.</div>
<div class="t" style="left:1291.40px;top:333.00px;font-size:20.5px;line-height:20.5px;color:#1d1d1b;transform:scaleX(0.9308);white-space:pre;">Why?</div>
<div class="t" style="left:1110.90px;top:359.00px;font-size:20.5px;line-height:20.5px;color:#1d1d1b;font-weight:bold;transform:scaleX(0.9453);">Alan</div>
<div class="t" style="left:1196.21px;top:359.00px;font-size:20.5px;line-height:20.5px;color:#1d1d1b;transform:scaleX(0.9941);">Because I want to</div>
<div class="t" style="left:1197.20px;top:385.00px;font-size:20.5px;line-height:20.5px;color:#1d1d1b;transform:scaleX(0.9930);">show you</div>
<div class="t" style="left:1197.20px;top:411.00px;font-size:20.5px;line-height:20.5px;color:#1d1d1b;transform:scaleX(0.9979);">something. Look.</div>
<div class="t" style="left:1110.56px;top:437.00px;font-size:20.5px;line-height:20.5px;color:#1d1d1b;font-weight:bold;transform:scaleX(0.9374);">Roman</div>
<div class="t" style="left:1197.20px;top:437.00px;font-size:20.5px;line-height:20.5px;color:#1d1d1b;transform:scaleX(0.9428);white-space:pre;">What’s that?</div>
<div class="t" style="left:1310.75px;top:438.00px;font-size:11px;line-height:11px;color:#1d1d1b;font-weight:bold;transform:scaleX(0.9000);white-space:pre;">3</div>
<div class="t" style="left:1317.17px;top:435.00px;font-size:20.5px;line-height:20.5px;color:#1d1d1b;transform:scaleX(0.7709);white-space:pre;">___</div>
<div class="t" style="left:1196.25px;top:463.00px;font-size:20.5px;line-height:20.5px;color:#1d1d1b;transform:scaleX(0.9512);">(you / buy) a new</div>
<div class="t" style="left:1197.20px;top:489.00px;font-size:20.5px;line-height:20.5px;color:#1d1d1b;transform:scaleX(0.9121);">video game?</div>
<div class="t" style="left:937.60px;top:515.00px;font-size:20.5px;line-height:20.5px;color:#1d1d1b;font-weight:bold;transform:scaleX(0.9453);">Alan</div>
<div class="t" style="left:1023.80px;top:515.00px;font-size:20.5px;line-height:20.5px;color:#1d1d1b;transform:scaleX(0.8703);white-space:pre;">Yes, I</div>
<div class="t" style="left:1073.00px;top:516.00px;font-size:11px;line-height:11px;color:#1d1d1b;font-weight:bold;transform:scaleX(0.9000);white-space:pre;">4</div>
<div class="t" style="left:1080.84px;top:513.00px;font-size:20.5px;line-height:20.5px;color:#1d1d1b;transform:scaleX(0.8358);white-space:pre;">___</div>
<div class="t" style="left:1107.70px;top:515.00px;font-size:20.5px;line-height:20.5px;color:#1d1d1b;white-space:pre;">.</div>
<div class="t" style="left:1117.30px;top:515.00px;font-size:20.5px;line-height:20.5px;color:#1d1d1b;transform:scaleX(0.9956);white-space:pre;">It’s a fantasy game, called</div>
<div class="t" style="left:1023.80px;top:541.00px;font-size:20.5px;line-height:20.5px;color:#1d1d1b;font-style:italic;transform:scaleX(0.9539);white-space:pre;">Hero.</div>
<div class="t" style="left:1076.20px;top:542.00px;font-size:11px;line-height:11px;color:#1d1d1b;font-weight:bold;transform:scaleX(0.9000);white-space:pre;">5</div>
<div class="t" style="left:1082.78px;top:539.00px;font-size:20.5px;line-height:20.5px;color:#1d1d1b;transform:scaleX(0.7821);white-space:pre;">___</div>
<div class="t" style="left:1115.27px;top:541.00px;font-size:20.5px;line-height:20.5px;color:#1d1d1b;transform:scaleX(1.0257);white-space:pre;">(you / hear) of it?</div>
<div class="t" style="left:937.26px;top:567.00px;font-size:20.5px;line-height:20.5px;color:#1d1d1b;font-weight:bold;transform:scaleX(0.9374);">Roman</div>
<div class="t" style="left:1022.81px;top:567.00px;font-size:20.5px;line-height:20.5px;color:#1d1d1b;transform:scaleX(0.9853);white-space:pre;">No, I</div>
<div class="t" style="left:1070.03px;top:568.00px;font-size:11px;line-height:11px;color:#1d1d1b;font-weight:bold;transform:scaleX(1.0400);white-space:pre;">6</div>
<div class="t" style="left:1077.84px;top:565.00px;font-size:20.5px;line-height:20.5px;color:#1d1d1b;transform:scaleX(0.8416);white-space:pre;">___</div>
<div class="t" style="left:1104.90px;top:567.00px;font-size:20.5px;line-height:20.5px;color:#1d1d1b;white-space:pre;">.</div>
<div class="t" style="left:1114.48px;top:567.00px;font-size:20.5px;line-height:20.5px;color:#1d1d1b;transform:scaleX(1.0155);white-space:pre;">But it looks really good.</div>
<div class="t" style="left:937.60px;top:593.00px;font-size:20.5px;line-height:20.5px;color:#1d1d1b;font-weight:bold;transform:scaleX(0.9453);">Alan</div>
<div class="t" style="left:1022.76px;top:593.00px;font-size:20.5px;line-height:20.5px;color:#1d1d1b;transform:scaleX(1.0399);">My brother told me about it. He</div>
<div class="t" style="left:1022.77px;top:619.00px;font-size:20.5px;line-height:20.5px;color:#1d1d1b;transform:scaleX(1.0284);">loves it.</div>
<div class="t" style="left:937.26px;top:645.00px;font-size:20.5px;line-height:20.5px;color:#1d1d1b;font-weight:bold;transform:scaleX(0.9374);">Roman</div>
<div class="t" style="left:1023.60px;top:646.00px;font-size:11px;line-height:11px;color:#1d1d1b;font-weight:bold;transform:scaleX(0.9000);white-space:pre;">7</div>
<div class="t" style="left:1030.28px;top:643.00px;font-size:20.5px;line-height:20.5px;color:#1d1d1b;transform:scaleX(0.7821);white-space:pre;">___</div>
<div class="t" style="left:1061.97px;top:645.00px;font-size:20.5px;line-height:20.5px;color:#1d1d1b;transform:scaleX(1.0264);white-space:pre;">(he / play) it a lot?</div>
<div class="t" style="left:937.60px;top:671.00px;font-size:20.5px;line-height:20.5px;color:#1d1d1b;font-weight:bold;transform:scaleX(0.9453);">Alan</div>
<div class="t" style="left:1023.80px;top:671.00px;font-size:20.5px;line-height:20.5px;color:#1d1d1b;transform:scaleX(0.8998);white-space:pre;">Yes, he</div>
<div class="t" style="left:1090.80px;top:672.00px;font-size:11px;line-height:11px;color:#1d1d1b;font-weight:bold;transform:scaleX(1.0333);white-space:pre;">8</div>
<div class="t" style="left:1098.33px;top:669.00px;font-size:20.5px;line-height:20.5px;color:#1d1d1b;transform:scaleX(0.8329);white-space:pre;">___</div>
<div class="t" style="left:1125.15px;top:671.00px;font-size:20.5px;line-height:20.5px;color:#1d1d1b;white-space:pre;">.</div>
<div class="t" style="left:1135.50px;top:671.00px;font-size:20.5px;line-height:20.5px;color:#1d1d1b;transform:scaleX(0.9940);white-space:pre;">And he says it’s amazing.</div>
<div class="t" style="left:937.26px;top:697.00px;font-size:20.5px;line-height:20.5px;color:#1d1d1b;font-weight:bold;transform:scaleX(0.9374);">Roman</div>
<div class="t" style="left:1023.80px;top:697.00px;font-size:20.5px;line-height:20.5px;color:#1d1d1b;transform:scaleX(1.0071);">OK, so let’s play it now!</div>
<div class="t" style="left:934.10px;top:768.00px;font-size:21.5px;line-height:21.5px;color:#12a0a6;font-weight:bold;transform:scaleX(0.9000);-webkit-text-stroke:0.55px #12a0a6;">5</div>
<div class="t" style="left:967.80px;top:768.00px;font-size:20.5px;line-height:20.5px;color:#1d1d1b;font-weight:bold;transform:scaleX(0.9100);">Write five questions to ask a classmate. Use</div>
<div class="t" style="left:967.80px;top:794.00px;font-size:20.5px;line-height:20.5px;color:#1d1d1b;font-weight:bold;transform:scaleX(0.9171);">the ideas in the box or your own ideas.</div>
<div class="t" style="left:980.52px;top:839.00px;font-size:20.5px;line-height:20.5px;color:#1d1d1b;transform:scaleX(0.9823);">read a book about Sherlock Holmes</div>
<div class="t" style="left:981.50px;top:865.00px;font-size:20.5px;line-height:20.5px;color:#1d1d1b;transform:scaleX(0.9843);">see a Spider-Man film</div>
<div class="t" style="left:1199.72px;top:865.00px;font-size:20.5px;line-height:20.5px;color:#1d1d1b;transform:scaleX(1.0172);">write a poem</div>
<div class="t" style="left:980.49px;top:891.00px;font-size:20.5px;line-height:20.5px;color:#1d1d1b;transform:scaleX(1.0114);">meet a famous author or actor</div>
<div class="t" style="left:980.52px;top:917.00px;font-size:20.5px;line-height:20.5px;color:#1d1d1b;transform:scaleX(0.9812);">buy a hardback book</div>
<div class="t" style="left:1189.60px;top:917.00px;font-size:20.5px;line-height:20.5px;color:#1d1d1b;transform:scaleX(1.0248);">try to write a novel</div>
<div class="t" style="left:934.10px;top:994.00px;font-size:21.5px;line-height:21.5px;color:#12a0a6;font-weight:bold;transform:scaleX(0.9000);-webkit-text-stroke:0.55px #12a0a6;">6</div>
<div class="t" style="left:968.80px;top:995.00px;font-size:19px;line-height:19px;color:#12a0a6;font-weight:bold;transform:scaleX(0.9169);">ACTIVATE</div>
<div class="t" style="left:1063.00px;top:994.00px;font-size:20.5px;line-height:20.5px;color:#1d1d1b;font-weight:bold;transform:scaleX(0.9079);">Talk about your experiences. Ask</div>
</div>
<div class="layer" id="sidebar" style="z-index:3">
<div class="a" style="left:1851px;top:153px;width:69px;height:855px;background:#f7f7f7"></div>
<svg style="left:1873px;top:175px" width="26" height="26" viewBox="0 0 26 26" ><defs><linearGradient id="sg1" x1="0" y1="0" x2="1" y2="1"><stop offset="0" stop-color="#1b6fe0"/><stop offset="1" stop-color="#0a2fae"/></linearGradient><linearGradient id="sg2" x1="0" y1="0" x2="1" y2="1"><stop offset="0" stop-color="#6a3ff0"/><stop offset="1" stop-color="#b95bf5"/></linearGradient></defs><path d="M14.6 14.6 L17.2 17.2" stroke="#1a1a3a" stroke-width="3.2"/><path d="M17.4 17.4 L22.6 22.6" stroke="url(#sg2)" stroke-width="4.6" stroke-linecap="round"/><circle cx="9.4" cy="9.6" r="6.9" fill="none" stroke="url(#sg1)" stroke-width="3.6"/></svg>
<svg style="left:1870px;top:235.5px" width="32" height="32" viewBox="0 0 32 32" ><defs><linearGradient id="bg1" x1="0" y1="0" x2="1" y2="1"><stop offset="0" stop-color="#2fc8f6"/><stop offset="1" stop-color="#1544d8"/></linearGradient><linearGradient id="bg2" x1="0" y1="0" x2="0" y2="1"><stop offset="0" stop-color="#1b62e8"/><stop offset="1" stop-color="#1a8ff0"/></linearGradient><linearGradient id="bg3" x1="0" y1="0" x2="1" y2="1"><stop offset="0" stop-color="#f4fdff"/><stop offset="1" stop-color="#d4f4fb"/></linearGradient></defs><path d="M16.4 1.6 a14 14 0 1 1 -6.2 26.6 L1.6 30.4 L3.6 22.2 A14 14 0 0 1 16.4 1.6z" fill="url(#bg3)" stroke="url(#bg1)" stroke-width="1.8" stroke-linejoin="round"/><path d="M11.6 6.8 L15.2 8.2 V21.4 L11.6 23.6z" fill="url(#bg2)"/><path d="M15.2 12.2 L21.6 15 Q23.4 18 20.4 20.2 L14.2 24.2 L11.6 23.6 L15.2 21.4 L19.4 18.4 L16.4 16.6z" fill="#35c0ee"/><path d="M11.6 23.6 L15.2 21.4 L20.4 20.2 L14.2 24.2z" fill="#1b62e8"/></svg>
<svg style="left:1873px;top:301px" width="26" height="26" viewBox="0 0 26 26" ><defs><linearGradient id="tg1" x1="0" y1="0" x2="1" y2="1"><stop offset="0" stop-color="#2a7be8"/><stop offset="0.5" stop-color="#0b3fc4"/><stop offset="1" stop-color="#0a2a9e"/></linearGradient></defs><path d="M13.4 1.6 L22 1 a2.6 2.6 0 0 1 2.6 2.6 L24.2 12 a3 3 0 0 1 -0.9 1.9 L13.2 24 a2.6 2.6 0 0 1 -3.6 0 L1.6 16 a2.6 2.6 0 0 1 0 -3.6 L11.6 2.4 a3 3 0 0 1 1.8 -0.8z" fill="url(#tg1)"/><circle cx="18.6" cy="7.2" r="3" fill="#f8c21a"/><circle cx="18.6" cy="7.2" r="1.5" fill="#fff4c0"/></svg>
<svg style="left:1872.5px;top:367.5px" width="27" height="21" viewBox="0 0 27 21" ><defs><linearGradient id="tb1" x1="0" y1="0" x2="1" y2="0"><stop offset="0" stop-color="#0b8a8c"/><stop offset="0.6" stop-color="#138c6a"/><stop offset="1" stop-color="#1d9a48"/></linearGradient><linearGradient id="tb2" x1="0" y1="0" x2="0" y2="1"><stop offset="0" stop-color="#2a6ae8"/><stop offset="1" stop-color="#0c36c0"/></linearGradient></defs><path d="M8.6 6 V3.4 a2 2 0 0 1 2 -2 h5.8 a2 2 0 0 1 2 2 V6" fill="none" stroke="#f2b01e" stroke-width="2.2"/><rect x="1.6" y="9" width="23.8" height="11" rx="1.6" fill="url(#tb1)"/><rect x="0.4" y="5.4" width="26.2" height="5.8" rx="1.4" fill="url(#tb2)"/><rect x="11.4" y="9.4" width="4.2" height="5.6" rx="1.2" fill="#f2b01e"/></svg>
<svg style="left:1872px;top:426px" width="29" height="29" viewBox="0 0 29 29" ><defs><linearGradient id="ch1" x1="0" y1="0" x2="0" y2="1"><stop offset="0" stop-color="#2a78ee"/><stop offset="1" stop-color="#0a2fb4"/></linearGradient><linearGradient id="ch2" x1="0" y1="0" x2="0" y2="1"><stop offset="0" stop-color="#8a2cf8"/><stop offset="1" stop-color="#c35cf6"/></linearGradient></defs><path d="M16 1.6 h2.4 v2 h2.2 v-2 h2.4 v2 h2.2 v-2 h1.8 v5.6 l-2 1.8 v7.6 h2 v3.2 h-11 v-3.2 h2 v-7.6 l-2 -1.8z" fill="url(#ch2)"/><circle cx="8.8" cy="9.4" r="4.6" fill="url(#ch1)"/><path d="M3.6 13.6 h10.4 a1.4 1.4 0 0 1 0 2.8 h-1.6 q0.6 5 4.4 7.2 a2.6 2.6 0 0 1 -1 4.8 H1.8 a2.6 2.6 0 0 1 -1 -4.8 q3.8 -2.2 4.4 -7.2 h-1.6 a1.4 1.4 0 0 1 0 -2.8z" fill="url(#ch1)"/></svg>
<svg style="left:1873px;top:489px" width="26" height="28" viewBox="0 0 26 28" ><defs><linearGradient id="m1" x1="0" y1="0" x2="1" y2="1"><stop offset="0" stop-color="#1a4fc0"/><stop offset="1" stop-color="#38c8f4"/></linearGradient><linearGradient id="m2" x1="0" y1="0" x2="0" y2="1"><stop offset="0" stop-color="#4a6ee0"/><stop offset="1" stop-color="#b07ce8"/></linearGradient><linearGradient id="m3" x1="0" y1="1" x2="1" y2="0"><stop offset="0" stop-color="#c99af0"/><stop offset="1" stop-color="#6a3fa8"/></linearGradient></defs><path d="M13 1 L24 7.2 a1.6 1.6 0 0 1 0.8 1.4 V19.4 a1.6 1.6 0 0 1 -0.8 1.4 L13.8 26.6 a1.6 1.6 0 0 1 -1.6 0 L2 20.8 a1.6 1.6 0 0 1 -0.8 -1.4 V8.6 A1.6 1.6 0 0 1 2 7.2z" fill="url(#m2)"/><path d="M13 1 L24 7.2 a1.6 1.6 0 0 1 0.8 1.4 V17 L17 13 V9 L9.6 4.6 L12.2 1.2 a1.6 1.6 0 0 1 0.8 -0.2z" fill="url(#m1)"/><path d="M24.8 17 V19.4 a1.6 1.6 0 0 1 -0.8 1.4 L13.8 26.6 a1.6 1.6 0 0 1 -1.6 0 L6 23 L17 16.6 V13z" fill="url(#m3)"/><circle cx="12.6" cy="13.6" r="4.2" fill="#f7f7f7"/></svg>
<svg style="left:1873px;top:553px" width="26" height="26" viewBox="0 0 26 26" ><rect x="7" y="0.6" width="18.4" height="24" rx="1.6" fill="#1490df"/><rect x="7" y="0.6" width="9.2" height="8" fill="#0a5fb4"/><rect x="16.2" y="0.6" width="9.2" height="8" rx="1.2" fill="#28a8ea"/><rect x="16.2" y="8.6" width="9.2" height="8" fill="#35c1f1"/><path d="M7 14 L25.4 24.6 H8.6 A1.6 1.6 0 0 1 7 23z" fill="#1a9ae4"/><path d="M25.4 12.6 L12 22 L25.4 24.6z" fill="#0f6cc0"/><rect x="0.4" y="5.2" width="16.4" height="16.4" rx="1.8" fill="#0f78d4"/><circle cx="8.6" cy="13.4" r="4.2" fill="none" stroke="#fff" stroke-width="2.3"/></svg>
<svg style="left:1872px;top:619px" width="27" height="20" viewBox="0 0 27 20" ><path d="M0.4 4 L26.6 0.6 L18.4 19 L11.2 13.2 L7.6 17.6 L6.6 9.4z" fill="#1668d0"/><path d="M26.6 0.6 L6.4 8.8 L7.6 17.6 L9.4 11.6z" fill="#f3a712"/><path d="M9.4 11.6 L7.6 17.6 L12.4 14z" fill="#10327a"/><path d="M0.4 4 L26.6 0.6 L6.6 8.6z" fill="#2a86e6"/></svg>
<svg style="left:1873px;top:679px" width="25" height="26" viewBox="0 0 25 26" ><defs><linearGradient id="tr1" x1="0" y1="0" x2="1" y2="1"><stop offset="0" stop-color="#0a7a86"/><stop offset="1" stop-color="#2aa04a"/></linearGradient></defs><rect x="10.4" y="18" width="4.4" height="7.4" rx="1" fill="#f5a81c"/><path d="M12.6 0.8 a5.2 5.2 0 0 1 5 4 a5 5 0 0 1 3.2 6.2 a5.4 5.4 0 0 1 -1.6 10 H6 a5.4 5.4 0 0 1 -1.8 -10 a5 5 0 0 1 3.4 -6.2 a5.2 5.2 0 0 1 5 -4z" fill="url(#tr1)"/><circle cx="14.2" cy="4.8" r="2" fill="#7fd0b0" opacity="0.5"/><circle cx="16.8" cy="10.6" r="2.2" fill="#7fd0b0" opacity="0.5"/><circle cx="19" cy="16.4" r="2.2" fill="#7fd0b0" opacity="0.5"/></svg>
<svg style="left:1876.5px;top:751.5px" width="17" height="17" viewBox="0 0 17 17" ><path d="M8.5 0 V17 M0 8.5 H17" stroke="#1b1b1b" stroke-width="1.4" fill="none"/></svg>
<div class="a" style="left:1865px;top:875px;width:42px;height:1px;background:#cfcfcf"></div>
<svg style="left:1872.5px;top:900.5px" width="25" height="19" viewBox="0 0 25 19" ><g fill="none" stroke="#1b1b1b" stroke-width="1.8" stroke-linecap="round" stroke-linejoin="round"><rect x="1" y="1" width="23" height="17" rx="3.2"/><path d="M15.6 1.2 V17.8 M4.6 9.5 H11.6 M8.8 6.4 L11.8 9.5 L8.8 12.6" stroke-width="1.6"/></g></svg>
<svg style="left:1872px;top:960px" width="26" height="26" viewBox="0 0 26 26" ><g fill="none" stroke="#1b1b1b" stroke-width="1.7" stroke-linecap="round" stroke-linejoin="round"><path d="M15.37 1.34 A11.90 11.90 0 0 0 10.63 1.34 L10.82 4.58 A8.70 8.70 0 0 0 6.79 6.90 L4.09 5.11 A11.90 11.90 0 0 0 1.71 9.22 L4.62 10.68 A8.70 8.70 0 0 0 4.62 15.32 L1.71 16.78 A11.90 11.90 0 0 0 4.09 20.89 L6.79 19.10 A8.70 8.70 0 0 0 10.82 21.42 L10.63 24.66 A11.90 11.90 0 0 0 15.37 24.66 L15.18 21.42 A8.70 8.70 0 0 0 19.21 19.10 L21.91 20.89 A11.90 11.90 0 0 0 24.29 16.78 L21.38 15.32 A8.70 8.70 0 0 0 21.38 10.68 L24.29 9.22 A11.90 11.90 0 0 0 21.91 5.11 L19.21 6.90 A8.70 8.70 0 0 0 15.18 4.58 Z"/><circle cx="13" cy="13" r="3.3"/></g></svg>

</div>
<div class="layer" id="taskbar" style="z-index:4">
<div class="a" style="left:0px;top:1008px;width:1920px;height:72px;background:linear-gradient(90deg,#1c2022 0%,#1c2022 22%,#151f2d 32%,#131c32 40%,#1f1a33 50%,#29183e 60%,#2b1843 68%,#2b1b3b 80%,#271c31 92%,#221c27 100%)"></div>
<div class="a" style="left:0px;top:1008px;width:1920px;height:72px;background:linear-gradient(180deg,rgba(0,0,0,0.12) 0%,rgba(0,0,0,0) 30%,rgba(0,0,0,0) 100%)"></div>
<svg style="left:29px;top:1032px" width="38" height="25" viewBox="0 0 38 25" ><defs><linearGradient id="cl1" x1="0" y1="0" x2="0" y2="1"><stop offset="0" stop-color="#9dbaf4"/><stop offset="0.5" stop-color="#d3e2fa"/><stop offset="0.85" stop-color="#b5ccf6"/><stop offset="1" stop-color="#7c9fee"/></linearGradient></defs><path d="M8 24 a7.2 7.2 0 0 1 -1 -14.2 a11 11 0 0 1 20.6 -2.4 a8.6 8.6 0 0 1 2.4 16.6z" fill="url(#cl1)"/><path d="M21 12.4 a6.4 6.4 0 0 1 9 -4" fill="none" stroke="#a8c0f4" stroke-width="1" opacity="0.8"/></svg>
<svg style="left:744.5px;top:1028px" width="36" height="36" viewBox="0 0 36 36" ><defs><linearGradient id="wn" x1="0" y1="0" x2="1" y2="1"><stop offset="0" stop-color="#7fd8fc"/><stop offset="0.5" stop-color="#3dbaf8"/><stop offset="1" stop-color="#109af0"/></linearGradient></defs><path d="M0.4 2 a1.6 1.6 0 0 1 1.6 -1.6 H16.8 V16.8 H0.4z M18.6 0.4 H33.6 a1.6 1.6 0 0 1 1.6 1.6 V16.8 H18.6z M0.4 18.6 H16.8 V35.2 H2 a1.6 1.6 0 0 1 -1.6 -1.6z M18.6 18.6 H35.2 V33.6 a1.6 1.6 0 0 1 -1.6 1.6 H18.6z" fill="url(#wn)"/></svg>
<svg style="left:811px;top:1028px" width="37" height="34" viewBox="0 0 37 34" ><defs><linearGradient id="tv1" x1="0" y1="0" x2="0" y2="1"><stop offset="0" stop-color="#ffffff"/><stop offset="1" stop-color="#dcdcdc"/></linearGradient><linearGradient id="tv2" x1="0" y1="0" x2="0" y2="1"><stop offset="0" stop-color="#8a8a8a"/><stop offset="1" stop-color="#555"/></linearGradient></defs><rect x="0" y="9.4" width="27" height="24.2" rx="2" fill="url(#tv2)"/><rect x="8.8" y="0" width="27.6" height="24.8" rx="2" fill="url(#tv1)"/><rect x="8.8" y="9.4" width="18.2" height="15.4" rx="1" fill="#aaaaaa" opacity="0.85"/></svg>
<svg style="left:877px;top:1027.5px" width="35" height="35" viewBox="0 0 35 35" ><defs><linearGradient id="ct1" x1="0" y1="0" x2="1" y2="1"><stop offset="0" stop-color="#8a7ad0"/><stop offset="0.4" stop-color="#7684e6"/><stop offset="1" stop-color="#4f50c4"/></linearGradient></defs><path d="M17.6 0.4 A16.8 16.8 0 1 1 9 31.8 L0.6 34.2 L3.2 26 A16.8 16.8 0 0 1 17.6 0.4z" fill="url(#ct1)"/><rect x="7.4" y="10.6" width="13.6" height="13.8" rx="2.4" fill="#fff"/><path d="M22.4 15.6 L26.4 12.2 a0.6 0.6 0 0 1 1 0.5 V22.4 a0.6 0.6 0 0 1 -1 0.5 L22.4 19.4z" fill="#fff"/></svg>
<svg style="left:943px;top:1027px" width="36" height="36" viewBox="0 0 36 36" ><defs><clipPath id="cc"><circle cx="18" cy="18" r="18"/></clipPath></defs><g clip-path="url(#cc)"><rect width="36" height="36" fill="#fbc116"/><path d="M18 18 L-4 30 L-4 -6 L2 -6z" fill="#2da94f"/><path d="M18 18 L2.4 9 L-4 40 L12 40 L20 30z" fill="#2da94f"/><path d="M18 18 L2.4 9 L-2 -4 H40 V9z" fill="#e8412f"/><path d="M18 18 L33.6 9 H40 V40 H10z" fill="#fbc116"/></g><circle cx="18" cy="18" r="8.4" fill="#fff"/><circle cx="18" cy="18" r="6.6" fill="#3d82f0"/></svg>
<svg style="left:962px;top:1019px" width="25" height="25" viewBox="0 0 25 25" ><circle cx="12.5" cy="12.5" r="12.4" fill="#f0b4cf"/><circle cx="8.2" cy="12.2" r="3.6" fill="#8a9692"/><circle cx="17" cy="12.2" r="3.6" fill="#8a9692"/><path d="M11.6 11.6 h2" stroke="#555" stroke-width="1"/><path d="M3 15 q3 5 8 5" stroke="#333" stroke-width="0.9" fill="none"/></svg>
<div class="a" style="left:957px;top:1069.3px;width:9px;height:4.4px;background:#9b98a6;border-radius:2.2px"></div>
<svg style="left:1009px;top:1028.5px" width="37" height="33" viewBox="0 0 37 33" ><defs><linearGradient id="fx1" x1="0" y1="0" x2="0" y2="1"><stop offset="0" stop-color="#ffd75a"/><stop offset="1" stop-color="#f9b818"/></linearGradient><linearGradient id="fx2" x1="0" y1="0" x2="0" y2="1"><stop offset="0" stop-color="#1b88e6"/><stop offset="1" stop-color="#0a62c0"/></linearGradient></defs><path d="M0.2 2.6 a2 2 0 0 1 2 -2 H11.4 a2 2 0 0 1 1.4 0.6 L15.4 4 H0.2z" fill="#e8a30e"/><path d="M0.2 4 H11 L14.4 2.8 H34.6 a1.8 1.8 0 0 1 1.8 1.8 V31 a1.8 1.8 0 0 1 -1.8 1.8 H2 A1.8 1.8 0 0 1 0.2 31z" fill="url(#fx1)"/><path d="M6.2 32.8 V26 a3.4 3.4 0 0 1 3.4 -3.4 H26.8 a3.4 3.4 0 0 1 3.4 3.4 V32.8z" fill="url(#fx2)"/><rect x="10.6" y="26.6" width="15.4" height="2" rx="1" fill="#0a4c9c"/></svg>
<div class="a" style="left:1023px;top:1069.3px;width:9px;height:4.4px;background:#9b98a6;border-radius:2.2px"></div>
<svg style="left:1075px;top:1027px" width="34" height="34" viewBox="0 0 34 34" ><defs><linearGradient id="wd1" x1="0" y1="0" x2="1" y2="1"><stop offset="0" stop-color="#e4edfa"/><stop offset="0.45" stop-color="#b4cbef"/><stop offset="1" stop-color="#5c88d6"/></linearGradient><linearGradient id="wd2" x1="0" y1="0" x2="0" y2="1"><stop offset="0" stop-color="#2a6ad8"/><stop offset="1" stop-color="#0d3fa6"/></linearGradient></defs><rect x="0.6" y="0.6" width="31.8" height="32" rx="1.4" fill="url(#wd1)" stroke="#2a58b0" stroke-width="1"/><path d="M9.6 18.4 L33.8 21.6 L31.2 32.6 L1.2 32 L6 24z" fill="#fff" opacity="0.97"/><path d="M8 28 L29 30 M11 25 L30 27.4" stroke="#d4dcec" stroke-width="0.9"/><text x="3.4" y="24.2" font-family="Liberation Sans, sans-serif" font-weight="bold" font-size="26" fill="url(#wd2)" stroke="#0d3fa6" stroke-width="0.5" textLength="23" lengthAdjust="spacingAndGlyphs">W</text></svg>
<div class="a" style="left:1089px;top:1069.3px;width:9px;height:4.4px;background:#9b98a6;border-radius:2.2px"></div>
<div class="a" style="left:1129px;top:1015.3px;width:60px;height:59.5px;background:rgba(255,255,255,0.075);border:1px solid rgba(255,255,255,0.06);border-radius:7px"></div>
<svg style="left:1140.5px;top:1026.5px" width="37" height="37" viewBox="0 0 37 37" ><defs><linearGradient id="ed1" x1="0" y1="0" x2="1" y2="0.6"><stop offset="0" stop-color="#1aa0e4"/><stop offset="0.55" stop-color="#2fc4cc"/><stop offset="1" stop-color="#62d84e"/></linearGradient><linearGradient id="ed2" x1="0" y1="0" x2="0" y2="1"><stop offset="0" stop-color="#1a8adc"/><stop offset="1" stop-color="#0e56a8"/></linearGradient><clipPath id="ec"><circle cx="18.5" cy="18.5" r="18.3"/></clipPath></defs><g clip-path="url(#ec)"><rect width="37" height="37" fill="url(#ed2)"/><path d="M0 17 C2 4 12 -1 20 0.2 C30 1 37.5 8 37 18 C36.6 23.6 31 26.6 25.6 25.4 C21 24.4 21.6 20.6 23 18.6 C24 15.6 21.4 12.4 17.4 12.4 C9 12.4 2 17.4 0 26z" fill="url(#ed1)"/><path d="M10.4 21.6 C10 14.8 16 11.8 19.6 12.8 C13.4 15.6 13.8 24 19 28.4 C24 32.4 31 31 34.6 27 C32 33.6 25 37.6 18 37 C11.6 34.6 10.6 27 10.4 21.6z" fill="#0c4a9c"/><path d="M16.4 19.4 C16.8 24.6 21.6 29.6 28.4 28.6 C31 28.2 33.4 26.8 34.8 25.4 C33 26.2 28.6 27 25.2 25.4 C21.4 23.6 21.8 20.4 23 18.6z" fill="#12346e" opacity="0.55"/></g></svg>
<div class="a" style="left:1147px;top:1069.3px;width:24.4px;height:4.4px;background:#dba6ec;border-radius:2.2px"></div>
<svg style="left:1544.5px;top:1038px" width="19" height="11" viewBox="0 0 19 11" ><g fill="none" stroke="#fff" stroke-width="1.3" stroke-linecap="round" stroke-linejoin="round"><path d="M0.8 10 L9.5 1.2 L18.2 10"/></g></svg>
<svg style="left:1650px;top:1034.5px" width="24" height="18.5" viewBox="0 0 24 18.5" ><g fill="none" stroke="#fff" stroke-width="1.7" stroke-linecap="round"><path d="M1 6.6 a15.6 15.6 0 0 1 22 0"/><path d="M4.6 10.4 a10.6 10.6 0 0 1 14.8 0"/><path d="M8.2 14 a5.4 5.4 0 0 1 7.6 0"/></g><circle cx="12" cy="16.6" r="1.7" fill="#fff"/></svg>
<svg style="left:1686px;top:1034.5px" width="25" height="19" viewBox="0 0 25 19" ><g fill="none" stroke="#fff" stroke-width="1.6" stroke-linejoin="round" stroke-linecap="round"><path d="M1 6.2 H4.8 L9.8 1.2 V17.8 L4.8 12.8 H1z"/><path d="M12.8 6 a4.6 4.6 0 0 1 0 7"/><path d="M15.6 3 a8.6 8.6 0 0 1 0 13"/></g><path d="M19 0.8 a11.6 11.6 0 0 1 0 17.4" fill="none" stroke="#8a8494" stroke-width="1.4" stroke-linecap="round"/></svg>
<svg style="left:1721.5px;top:1033px" width="25" height="20" viewBox="0 0 25 20" ><g fill="none" stroke="#fff" stroke-linejoin="round" stroke-linecap="round"><rect x="5.4" y="5" width="15.6" height="13.4" rx="2.8" stroke-width="1.7"/><path d="M22 9.2 h1.4 a1 1 0 0 1 1 1 v3 a1 1 0 0 1 -1 1 H22z" fill="#fff" stroke-width="0.8"/><path d="M2 0.8 V4 M5.6 0.8 V4" stroke-width="1.5"/></g><path d="M0.6 4 H7 V6.4 a3.2 3.2 0 0 1 -2.2 3 V18.4 H2.8 V9.4 A3.2 3.2 0 0 1 0.6 6.4z" fill="#fff"/><path d="M7.6 8.6 H17.6 V16.4 H7.6z" fill="#fff"/></svg>
<svg style="left:1866px;top:1032px" width="24" height="24" viewBox="0 0 24 24" ><circle cx="12" cy="12" r="12" fill="#dba4ea"/></svg>
<div class="t" style="left:76.61px;top:1025.30px;font-size:18px;line-height:18px;color:#ffffff;transform:scaleX(0.8924);">14°C</div>
<div class="t" style="left:77.50px;top:1048.50px;font-size:18px;line-height:18px;color:#cfcfcf;transform:scaleX(1.0084);">Cloudy</div>
<div class="t" style="left:1587.58px;top:1036.00px;font-size:18px;line-height:18px;color:#ffffff;transform:scaleX(0.9188);">ENG</div>
<div class="t" style="left:1813.09px;top:1023.80px;font-size:18px;line-height:18px;color:#ffffff;transform:scaleX(0.9084);">12:08</div>
<div class="t" style="left:1768.50px;top:1047.20px;font-size:18px;line-height:18px;color:#ffffff;transform:scaleX(0.9492);">05.03.2023</div>
<div class="t" style="left:1873.20px;top:1036.20px;font-size:15px;line-height:15px;color:#1c1c1c;">1</div>
</div>
</div>
</body>
</html>
